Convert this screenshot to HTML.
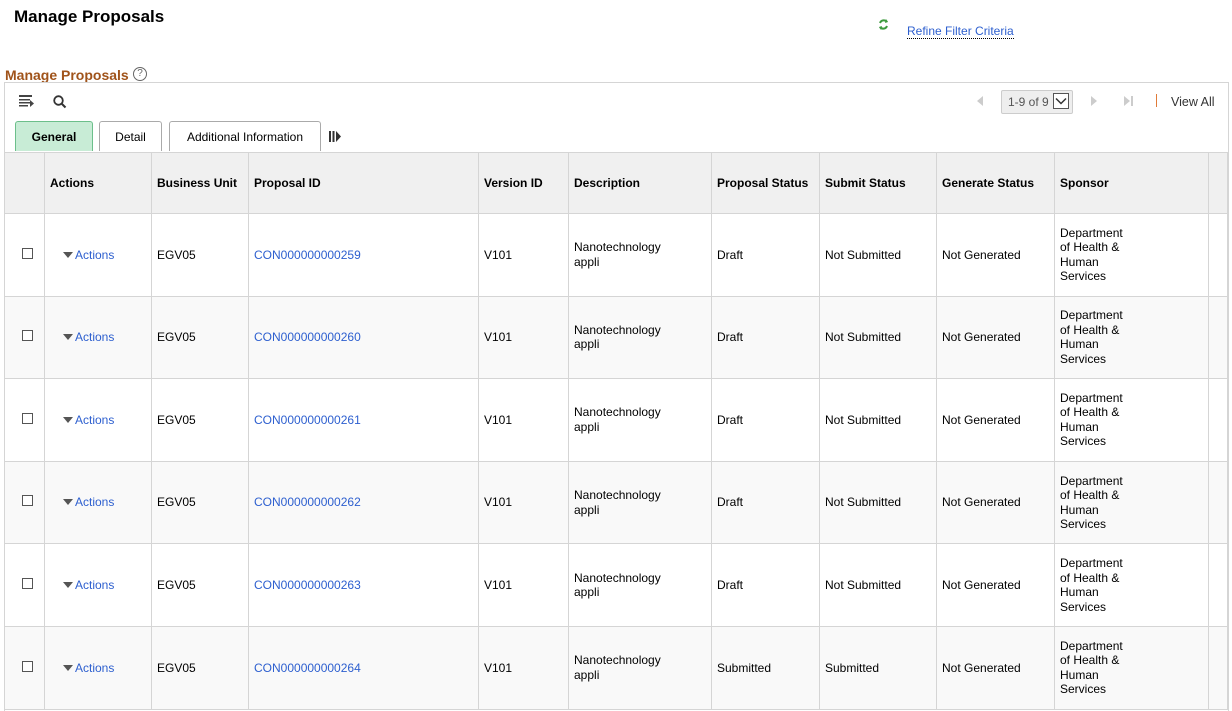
<!DOCTYPE html>
<html><head><meta charset="utf-8"><style>
body{margin:0;width:1232px;height:710px;overflow:hidden;background:#fff;font-family:"Liberation Sans",Arial,sans-serif;font-size:12px;color:#000;position:relative}
.a{position:absolute}
h1{position:absolute;left:14px;top:7px;margin:0;font-size:17px;font-weight:bold}
.link{color:#2d5fcf}
table{position:absolute;left:4px;top:152px;border-collapse:collapse;table-layout:fixed}
td,th{border:1px solid #d5d5d5;padding:0 5px;text-align:left;vertical-align:middle;font-size:12px}
th{background:#f0f0f0;height:60px;font-weight:bold}
td{height:81.6px;line-height:14.5px}
tr.g td{background:#f9f9f9}
.cb{display:inline-block;width:9px;height:9px;border:1px solid #555;background:#fff;margin-left:12px}
.tri{display:inline-block;width:0;height:0;border-left:5px solid transparent;border-right:5px solid transparent;border-top:6px solid #555;margin-right:2px;vertical-align:1px}
.tab{position:absolute;top:121px;height:30px;border:1px solid #aaa;border-bottom:none;border-radius:3px 3px 0 0;background:#fff;font-size:12px;line-height:30px;text-align:center;box-sizing:border-box}
</style></head><body>
<h1>Manage Proposals</h1>
<svg class="a" style="left:877px;top:18px" width="13" height="13" viewBox="0 0 13 13"><path d="M3 5a4 4 0 0 1 7-1" stroke="#3c9a3c" stroke-width="2" fill="none"/><path d="M9 1l2 3-3 1z" fill="#3c9a3c"/><path d="M10 8a4 4 0 0 1-7 1" stroke="#3c9a3c" stroke-width="2" fill="none"/><path d="M4 12l-2-3 3-1z" fill="#3c9a3c"/></svg>
<div class="a link" style="left:907px;top:25px;border-bottom:1px dotted #000;line-height:13px">Refine Filter Criteria</div>
<div class="a" style="left:5px;top:67px;font-size:14px;font-weight:bold;color:#a0531a">Manage Proposals</div>
<div class="a" style="left:133px;top:67px;width:12px;height:12px;border:1px solid #666;border-radius:50%;font-size:10px;line-height:12px;text-align:center;color:#666">?</div>
<div class="a" style="left:4px;top:82px;width:1223px;height:628px;border:1px solid #d5d5d5;border-bottom:none"></div>
<svg class="a" style="left:19px;top:95px" width="15" height="13" viewBox="0 0 15 13"><rect x="0" y="0" width="13" height="2" fill="#444"/><rect x="0" y="4" width="11" height="1.5" fill="#444"/><rect x="0" y="7" width="11" height="1.5" fill="#444"/><rect x="0" y="10" width="9" height="1.5" fill="#444"/><path d="M11 5l4 3.5-4 3.5z" fill="#444"/></svg>
<svg class="a" style="left:53px;top:95px" width="14" height="14" viewBox="0 0 14 14"><circle cx="5.5" cy="5.5" r="4.3" stroke="#333" stroke-width="1.8" fill="none"/><path d="M8.5 8.5l4 4" stroke="#333" stroke-width="2"/></svg>
<div class="a" style="left:977px;top:96px;width:0;height:0;border-top:5px solid transparent;border-bottom:5px solid transparent;border-right:6px solid #ccc"></div>
<div class="a" style="left:1001px;top:90px;width:72px;height:24px;border:1px solid #ccc;background:#eee;border-radius:2px;box-sizing:border-box;color:#555;line-height:22px;padding-left:6px">1-9 of 9</div>
<div class="a" style="left:1053px;top:93px;width:16px;height:16px;border:1px solid #555;background:#fff;box-sizing:border-box"><svg width="14" height="14" viewBox="0 0 14 14"><path d="M2 4.5l5 5 5-5" stroke="#333" stroke-width="1.5" fill="none"/></svg></div>
<div class="a" style="left:1091px;top:96px;width:0;height:0;border-top:5px solid transparent;border-bottom:5px solid transparent;border-left:6px solid #ccc"></div>
<div class="a" style="left:1124px;top:96px;width:0;height:0;border-top:5px solid transparent;border-bottom:5px solid transparent;border-left:6px solid #ccc"></div>
<div class="a" style="left:1131px;top:96px;width:2px;height:10px;background:#ccc"></div>
<div class="a" style="left:1156px;top:94px;width:1px;height:13px;background:#e07b39"></div>
<div class="a" style="left:1171px;top:95px;color:#333;font-size:12.5px">View All</div>
<div class="tab" style="left:15px;width:78px;background:#c8ecd6;border-color:#6cbf8b;font-weight:bold">General</div>
<div class="tab" style="left:99px;width:63px">Detail</div>
<div class="tab" style="left:169px;width:152px">Additional Information</div>
<svg class="a" style="left:329px;top:131px" width="13" height="11" viewBox="0 0 13 11"><rect x="0" y="0" width="2" height="11" fill="#333"/><rect x="3.5" y="0" width="2" height="11" fill="#333"/><path d="M7 0l5 5.5L7 11z" fill="#333"/></svg>
<table>
<colgroup><col style="width:40px"><col style="width:107px"><col style="width:97px"><col style="width:230px"><col style="width:90px"><col style="width:143px"><col style="width:108px"><col style="width:117px"><col style="width:118px"><col style="width:154px"><col style="width:19px"></colgroup>
<tr><th></th><th>Actions</th><th>Business Unit</th><th>Proposal ID</th><th>Version ID</th><th>Description</th><th>Proposal Status</th><th>Submit Status</th><th>Generate Status</th><th>Sponsor</th><th></th></tr>
<tr><td><span class="cb"></span></td><td style="padding-left:18px"><span class="tri"></span><span class="link">Actions</span></td><td>EGV05</td><td class="link">CON000000000259</td><td>V101</td><td>Nanotechnology<br>appli</td><td>Draft</td><td>Not Submitted</td><td>Not Generated</td><td>Department<br>of Health &amp;<br>Human<br>Services</td><td></td></tr>
<tr class="g"><td><span class="cb"></span></td><td style="padding-left:18px"><span class="tri"></span><span class="link">Actions</span></td><td>EGV05</td><td class="link">CON000000000260</td><td>V101</td><td>Nanotechnology<br>appli</td><td>Draft</td><td>Not Submitted</td><td>Not Generated</td><td>Department<br>of Health &amp;<br>Human<br>Services</td><td></td></tr>
<tr><td><span class="cb"></span></td><td style="padding-left:18px"><span class="tri"></span><span class="link">Actions</span></td><td>EGV05</td><td class="link">CON000000000261</td><td>V101</td><td>Nanotechnology<br>appli</td><td>Draft</td><td>Not Submitted</td><td>Not Generated</td><td>Department<br>of Health &amp;<br>Human<br>Services</td><td></td></tr>
<tr class="g"><td><span class="cb"></span></td><td style="padding-left:18px"><span class="tri"></span><span class="link">Actions</span></td><td>EGV05</td><td class="link">CON000000000262</td><td>V101</td><td>Nanotechnology<br>appli</td><td>Draft</td><td>Not Submitted</td><td>Not Generated</td><td>Department<br>of Health &amp;<br>Human<br>Services</td><td></td></tr>
<tr><td><span class="cb"></span></td><td style="padding-left:18px"><span class="tri"></span><span class="link">Actions</span></td><td>EGV05</td><td class="link">CON000000000263</td><td>V101</td><td>Nanotechnology<br>appli</td><td>Draft</td><td>Not Submitted</td><td>Not Generated</td><td>Department<br>of Health &amp;<br>Human<br>Services</td><td></td></tr>
<tr class="g"><td><span class="cb"></span></td><td style="padding-left:18px"><span class="tri"></span><span class="link">Actions</span></td><td>EGV05</td><td class="link">CON000000000264</td><td>V101</td><td>Nanotechnology<br>appli</td><td>Submitted</td><td>Submitted</td><td>Not Generated</td><td>Department<br>of Health &amp;<br>Human<br>Services</td><td></td></tr>
</table>
</body></html>
